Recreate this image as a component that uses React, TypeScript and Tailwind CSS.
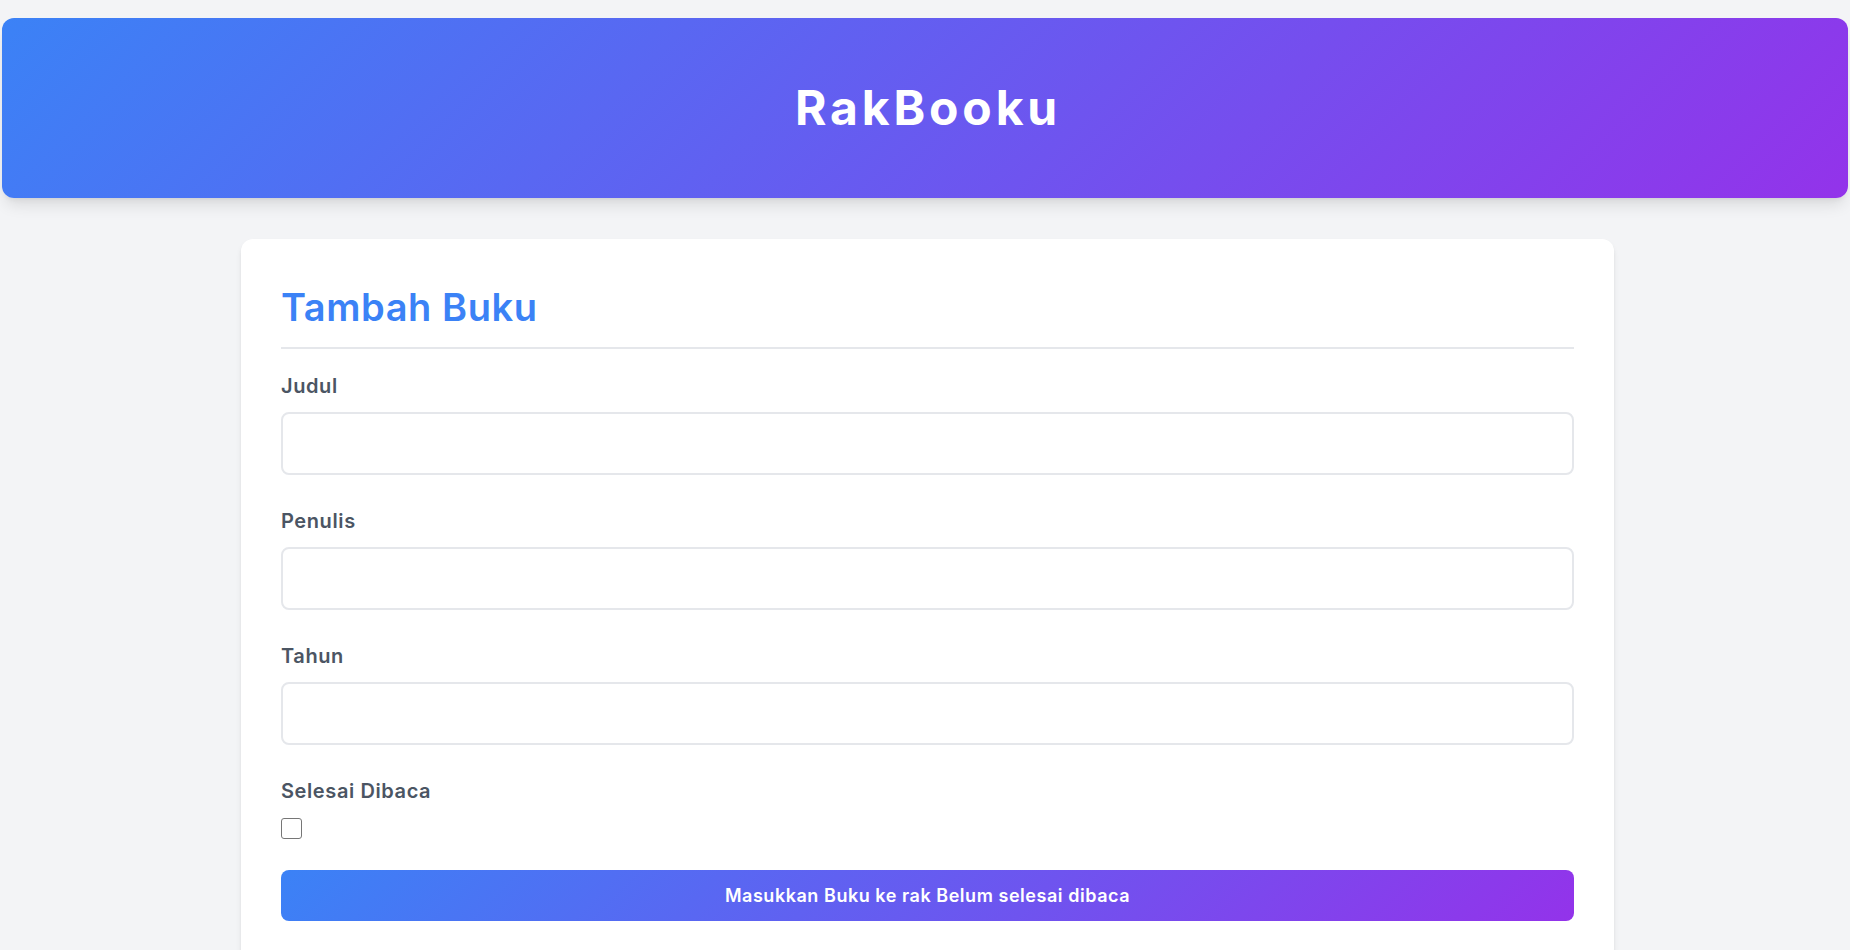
import React from "react";

const font = { fontFamily: "Inter, 'Noto Sans', sans-serif" };

function Field({ label, type = "text" }: { label: string; type?: string }) {
  return (
    <div className="mt-[32px] first:mt-[23px]">
      <label className="block text-[20px] leading-[28px] font-semibold tracking-[0.03em] text-[#4b5563]">{label}</label>
      <input
        type={type}
        className="mt-[12px] block w-full h-[63px] rounded-lg border-2 border-[#e5e7eb] bg-white px-4 text-[18px] outline-none"
      />
    </div>
  );
}

export default function App() {
  return (
    <div className="min-h-screen bg-[#f3f4f6] pt-[18px] pb-[40px]" style={font}>
      <header className="mx-[2px] h-[180px] rounded-xl bg-[linear-gradient(135deg,#3b82f6,#9333ea)] shadow-lg flex items-center justify-center">
        <h1 className="text-[48px] leading-[48px] font-bold text-white tracking-[0.08em] translate-x-[3px]">RakBooku</h1>
      </header>

      <main className="mt-[41px] ml-[241px] w-[1373px] rounded-xl bg-white shadow-md p-[40px]">
        <h2 className="text-[38px] leading-[56px] font-semibold tracking-[0.015em] text-[#3b82f6] pb-[12px] border-b-2 border-[#e5e7eb]">
          Tambah Buku
        </h2>
        <form>
          <Field label="Judul" />
          <Field label="Penulis" />
          <Field label="Tahun" type="number" />
          <div className="mt-[32px]">
            <label className="block text-[20px] leading-[28px] font-semibold tracking-[0.03em] text-[#4b5563]">Selesai Dibaca</label>
            <input
              type="checkbox"
              className="mt-[13px] block appearance-none w-[21px] h-[21px] rounded-[3px] border-[1.5px] border-[#767676] bg-white"
            />
          </div>
          <button
            type="button"
            className="mt-[31px] w-full h-[51px] rounded-lg bg-[linear-gradient(135deg,#3b82f6,#9333ea)] text-white text-[18px] font-semibold tracking-[0.03em]"
          >
            Masukkan Buku ke rak Belum selesai dibaca
          </button>
        </form>
      </main>
    </div>
  );
}
